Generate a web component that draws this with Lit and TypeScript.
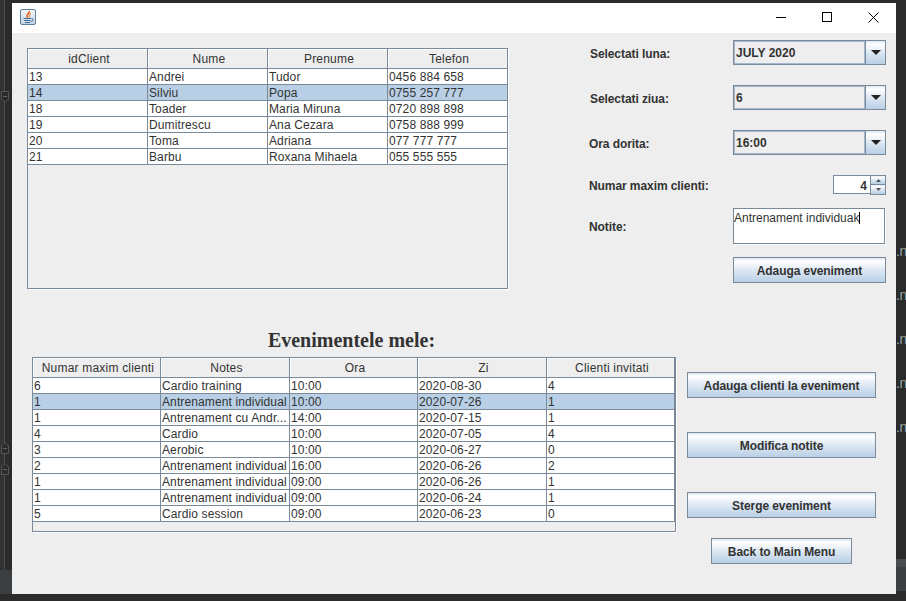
import { html, css, LitElement } from 'lit';
import { customElement } from 'lit/decorators.js';

const CLIENTS = [
  ['13', 'Andrei', 'Tudor', '0456 884 658'],
  ['14', 'Silviu', 'Popa', '0755 257 777'],
  ['18', 'Toader', 'Maria Miruna', '0720 898 898'],
  ['19', 'Dumitrescu', 'Ana Cezara', '0758 888 999'],
  ['20', 'Toma', 'Adriana', '077 777 777'],
  ['21', 'Barbu', 'Roxana Mihaela', '055 555 555'],
];

const EVENTS = [
  ['6', 'Cardio training', '10:00', '2020-08-30', '4'],
  ['1', 'Antrenament individual', '10:00', '2020-07-26', '1'],
  ['1', 'Antrenament cu Andr...', '14:00', '2020-07-15', '1'],
  ['4', 'Cardio', '10:00', '2020-07-05', '4'],
  ['3', 'Aerobic', '10:00', '2020-06-27', '0'],
  ['2', 'Antrenament individual', '16:00', '2020-06-26', '2'],
  ['1', 'Antrenament individual', '09:00', '2020-06-26', '1'],
  ['1', 'Antrenament individual', '09:00', '2020-06-24', '1'],
  ['5', 'Cardio session', '09:00', '2020-06-23', '0'],
];

@customElement('app-root')
export class AppRoot extends LitElement {
  static styles = css`
    :host {
      display: flex;
      width: 906px;
      height: 601px;
      overflow: hidden;
      background: #2b2b2b;
      font-family: 'Liberation Sans', Arial, sans-serif;
      font-size: 12px;
      color: #333333;
    }

    /* IDE behind the java window */
    .gutter {
      width: 12px;
      flex: none;
      display: block;
    }
    .side {
      width: 10px;
      flex: none;
      display: flex;
      flex-direction: column;
    }
    .side-lines {
      height: 559px;
      padding-top: 229px;
      box-sizing: border-box;
      font-family: 'Liberation Sans', sans-serif;
      font-size: 14px;
      letter-spacing: -0.5px;
      line-height: 44px;
      color: #98a3a6;
      white-space: pre;
      overflow: hidden;
    }
    .side-bar {
      height: 8px;
      background: #4a4b4c;
    }
    .side-foot {
      height: 24px;
      background: #3c3f41;
    }

    .window {
      width: 884px;
      height: 591px;
      margin-top: 3px;
      flex: none;
      background: #eeeeee;
    }
    .titlebar {
      height: 30px;
      background: #ffffff;
      display: flex;
      align-items: center;
      padding-left: 8px;
    }
    .titlebar .app-icon {
      width: 16px;
      height: 16px;
      margin: 0 auto 2px 0;
    }
    .win-btn {
      box-sizing: border-box;
      width: 46px;
      height: 30px;
      padding-bottom: 2px;
      display: flex;
      align-items: center;
      justify-content: center;
    }

    .top {
      display: flex;
      padding: 7px 0 0 15px;
    }
    .bottom {
      display: flex;
      margin-top: 40px;
      padding-left: 20px;
    }

    /* tables */
    .scroll {
      box-sizing: border-box;
      border: 1px solid #7a8a99;
      box-shadow: 1px 1px 0 #ffffff;
      flex: none;
    }
    .scroll.clients {
      width: 481px;
      height: 241px;
      margin-top: 8px;
    }
    .scroll.events {
      width: 644px;
      height: 175px;
    }
    table {
      border-collapse: separate;
      border-spacing: 0;
      table-layout: fixed;
      width: 100%;
    }
    th,
    td {
      box-sizing: border-box;
      padding: 2px 0 0 1px;
      border-right: 1px solid #7a8a99;
      border-bottom: 1px solid #7a8a99;
      white-space: nowrap;
      overflow: hidden;
      font-size: 12px;
      line-height: 13px;
    }
    th {
      height: 20px;
      padding-left: 3px;
      font-weight: normal;
      text-align: center;
      letter-spacing: 0.2px;
      background: #eeeeee;
      box-shadow: inset 1px 1px 0 #ffffff;
    }
    td {
      height: 16px;
      letter-spacing: 0.12px;
      background: #ffffff;
    }
    tr.sel td {
      background: #b8cfe5;
    }
    .clients th:last-child,
    .clients td:last-child {
      border-right: none;
    }

    /* form */
    .form {
      margin-left: 81px;
      width: 297px;
      flex: none;
    }
    .row {
      display: flex;
      align-items: center;
      margin-bottom: 20px;
    }
    .row.tight {
      margin-bottom: 13px;
    }
    .label {
      box-sizing: border-box;
      width: 144px;
      padding-top: 2px;
      flex: none;
      font-weight: bold;
      letter-spacing: -0.08px;
    }
    .label.inset {
      padding-left: 1px;
    }
    .combo {
      box-sizing: border-box;
      width: 153px;
      height: 25px;
      display: flex;
      border: 1px solid #7a8a99;
      font-weight: bold;
    }
    .combo-value {
      flex: 1;
      padding-left: 2px;
      line-height: 25px;
      box-shadow: inset 0 0 0 1px #a3b8cc;
    }
    .combo-arrow {
      width: 20px;
      flex: none;
      box-sizing: border-box;
      border-left: 1px solid #7a8a99;
      display: flex;
      align-items: center;
      justify-content: center;
    }
    .grad {
      background: linear-gradient(#dde8f3 0, #ffffff 14%, #dde8f3 50%, #b8cfe5 100%);
    }
    .spinner {
      display: flex;
      height: 20px;
      margin-left: 100px;
      width: 53px;
    }
    .spin-value {
      box-sizing: border-box;
      width: 37px;
      height: 19px;
      background: #ffffff;
      border: 1px solid #7a8a99;
      border-right: none;
      text-align: right;
      padding-right: 3px;
      font-weight: bold;
      line-height: 20px;
    }
    .spin-btns {
      width: 16px;
      display: flex;
      flex-direction: column;
    }
    .spin-btn {
      box-sizing: border-box;
      height: 10px;
      border: 1px solid #7a8a99;
      display: flex;
      align-items: center;
      justify-content: center;
    }
    .spin-btn + .spin-btn {
      border-top: none;
    }
    .notes {
      box-sizing: border-box;
      width: 152px;
      height: 36px;
      background: #ffffff;
      border: 1px solid #7a8a99;
      box-shadow: 1px 1px 0 #ffffff;
      line-height: 15px;
      padding: 2px 0 0 0;
    }
    .caret {
      display: inline-block;
      width: 1px;
      height: 12px;
      background: #000000;
      vertical-align: -2px;
    }
    .btn {
      box-sizing: border-box;
      height: 26px;
      border: 1px solid #7a8a99;
      font-weight: bold;
      letter-spacing: -0.08px;
      text-align: center;
      line-height: 26px;
      flex: none;
    }
    .btn.add {
      width: 153px;
      margin-left: 144px;
    }

    /* lower part */
    .events-col {
      flex: none;
      width: 644px;
    }
    h2 {
      margin: 0 0 6px 0;
      padding-right: 5px;
      font-family: 'Liberation Serif', 'Times New Roman', serif;
      font-size: 20px;
      line-height: 22px;
      font-weight: bold;
      text-align: center;
    }
    .actions {
      width: 189px;
      margin-left: 11px;
      padding-top: 43px;
      display: flex;
      flex-direction: column;
      align-items: center;
      flex: none;
    }
    .actions .btn {
      width: 189px;
      margin-bottom: 34px;
    }
    .actions .btn.back {
      width: 141px;
      margin: -14px 0 0 0;
    }
  `;

  private renderTable(cols: string[], widths: number[], rows: string[][]) {
    return html`<table>
      <colgroup>${widths.map((w) => html`<col style="width:${w}px" />`)}</colgroup>
      <thead>
        <tr>${cols.map((c) => html`<th>${c}</th>`)}</tr>
      </thead>
      <tbody>
        ${rows.map(
          (r, i) => html`<tr class=${i === 1 ? 'sel' : ''}>${r.map((v) => html`<td>${v}</td>`)}</tr>`
        )}
      </tbody>
    </table>`;
  }

  private renderCombo(value: string) {
    return html`<div class="combo">
      <div class="combo-value">${value}</div>
      <div class="combo-arrow grad">
        <svg width="10" height="5" viewBox="0 0 10 5"><path d="M0 0H10L5 5Z" fill="#222" /></svg>
      </div>
    </div>`;
  }

  private renderGutter() {
    return html`<svg class="gutter" width="12" height="601" viewBox="0 0 12 601">
      <rect x="0" y="0" width="4" height="570" fill="#303234" />
      <rect x="4" y="0" width="1" height="570" fill="#4d4f51" />
      <rect x="0" y="570" width="12" height="24" fill="#3c3f41" />
      <path d="M1.5 91.5H8.5V99L5 102.5L1.5 99Z" fill="#2b2b2b" stroke="#555" />
      <path d="M3 96.5H7" stroke="#666" />
      <path d="M1.5 453.5H8.5V446L5 442.5L1.5 446Z" fill="#2b2b2b" stroke="#555" />
      <path d="M3 448.5H7" stroke="#666" />
      <path d="M1.5 474.5H8.5V467L5 463.5L1.5 467Z" fill="#2b2b2b" stroke="#555" />
      <path d="M3 469.5H7" stroke="#666" />
    </svg>`;
  }

  private renderJavaIcon() {
    return html`<svg class="app-icon" viewBox="0 0 16 16">
      <defs>
        <linearGradient id="ic" x1="0" y1="0" x2="0" y2="1">
          <stop offset="0" stop-color="#f6f8fb" />
          <stop offset="1" stop-color="#c3d3e3" />
        </linearGradient>
      </defs>
      <rect x="0.5" y="0.5" width="15" height="15" rx="1.5" fill="url(#ic)" stroke="#5f7f9e" />
      <path d="M9 2C10.5 4 6.5 5 7 7.2C7.2 8 8 8.8 8 8.8" fill="none" stroke="#e2641a" stroke-width="1.6" />
      <path d="M10.8 4.2C9.6 5.4 9 6.5 9.6 8.2" fill="none" stroke="#ee8c3c" stroke-width="1.2" />
      <path d="M3.5 9.5H11M4 11.5H10.5M5 13.5H10" stroke="#3d6f9f" />
      <path d="M11.5 9.5C13.8 9.5 13.8 12 11 12.5" fill="none" stroke="#3d6f9f" />
    </svg>`;
  }

  render() {
    return html`
      ${this.renderGutter()}
      <div class="window">
        <div class="titlebar">
          ${this.renderJavaIcon()}
          <div class="win-btn">
            <svg width="10" height="10" viewBox="0 0 10 10"><path d="M0 5.5H10" stroke="#000" /></svg>
          </div>
          <div class="win-btn">
            <svg width="10" height="10" viewBox="0 0 10 10"><rect x="0.5" y="0.5" width="9" height="9" fill="none" stroke="#000" /></svg>
          </div>
          <div class="win-btn">
            <svg width="11" height="11" viewBox="0 0 11 11"><path d="M0.5 0.5L10.5 10.5M10.5 0.5L0.5 10.5" stroke="#000" stroke-width="1" /></svg>
          </div>
        </div>

        <div class="top">
          <div class="scroll clients">
            ${this.renderTable(['idClient', 'Nume', 'Prenume', 'Telefon'], [120, 120, 120, 119], CLIENTS)}
          </div>
          <div class="form">
            <div class="row">
              <div class="label inset">Selectati luna:</div>
              ${this.renderCombo('JULY 2020')}
            </div>
            <div class="row">
              <div class="label inset">Selectati ziua:</div>
              ${this.renderCombo('6')}
            </div>
            <div class="row">
              <div class="label">Ora dorita:</div>
              ${this.renderCombo('16:00')}
            </div>
            <div class="row tight">
              <div class="label">Numar maxim clienti:</div>
              <div class="spinner">
                <div class="spin-value">4</div>
                <div class="spin-btns">
                  <div class="spin-btn grad">
                    <svg width="5" height="3" viewBox="0 0 5 3"><path d="M2.5 0L5 3H0Z" fill="#555" /></svg>
                  </div>
                  <div class="spin-btn grad">
                    <svg width="5" height="3" viewBox="0 0 5 3"><path d="M0 0H5L2.5 3Z" fill="#555" /></svg>
                  </div>
                </div>
              </div>
            </div>
            <div class="row tight">
              <div class="label">Notite:</div>
              <div class="notes">Antrenament individuak<span class="caret"></span></div>
            </div>
            <div class="btn add grad">Adauga eveniment</div>
          </div>
        </div>

        <div class="bottom">
          <div class="events-col">
            <h2>Evenimentele mele:</h2>
            <div class="scroll events">
              ${this.renderTable(['Numar maxim clienti', 'Notes', 'Ora', 'Zi', 'Clienti invitati'], [128, 129, 128, 129, 128], EVENTS)}
            </div>
          </div>
          <div class="actions">
            <div class="btn grad">Adauga clienti la eveniment</div>
            <div class="btn grad">Modifica notite</div>
            <div class="btn grad">Sterge eveniment</div>
            <div class="btn back grad">Back to Main Menu</div>
          </div>
        </div>
      </div>
      <div class="side">
        <div class="side-lines">${'.n\n.n\n.n\n.n\n.n'}</div>
        <div class="side-bar"></div>
        <div class="side-foot"></div>
      </div>
    `;
  }
}
